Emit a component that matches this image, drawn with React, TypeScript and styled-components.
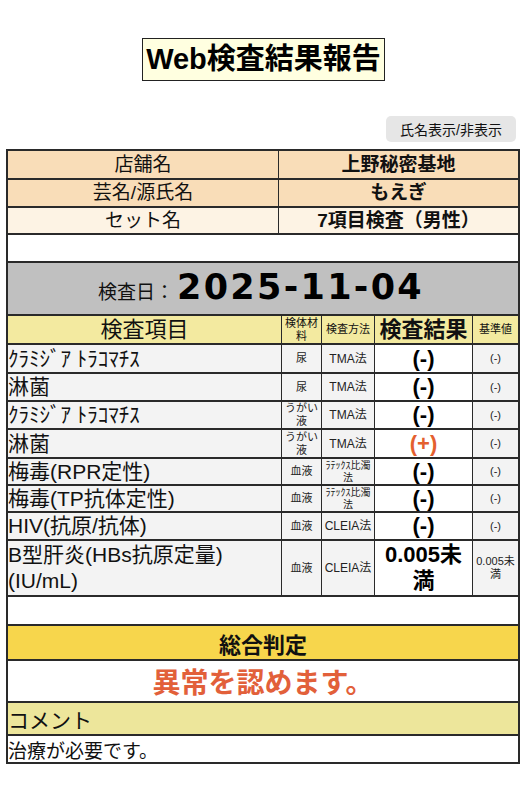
import React from 'react';
import styled, { createGlobalStyle } from 'styled-components';

const LINE = '#2a2a2a';

const GlobalStyle = createGlobalStyle`
  html, body { margin: 0; padding: 0; background: #fff; }
  body {
    font-family: "Liberation Sans", "Noto Sans CJK JP", sans-serif;
    color: #111;
  }
  * { box-sizing: border-box; }
`;

const Page = styled.div`
  width: 527px;
  padding-top: 38px;
  padding-bottom: 36px;
`;

const TitleBar = styled.div`
  display: flex;
  justify-content: center;
`;

const Title = styled.h1`
  margin: 0;
  height: 43px;
  padding: 0 3px;
  border: 1.5px solid #222;
  background: #ffffe0;
  font-size: 29px;
  font-weight: 700;
  line-height: 40px;
  color: #000;
`;

const Toolbar = styled.div`
  display: flex;
  justify-content: flex-end;
  margin-top: 35px;
  padding-right: 11px;
`;

const ToggleButton = styled.button`
  height: 26px;
  padding: 0 14px;
  border: none;
  border-radius: 5px;
  background: #e6e6e6;
  font-family: inherit;
  font-size: 14px;
  color: #111;
`;

const Sheet = styled.div`
  margin: 7px 7px 0 6px;
  border: 2px solid ${LINE};
`;

const Row = styled.div<{ $h: number; $bg?: string }>`
  display: flex;
  height: ${(p) => p.$h}px;
  background: ${(p) => p.$bg || '#fff'};
  &:not(:first-child) {
    border-top: 2px solid ${LINE};
  }
`;

const InfoRow = styled(Row)`
  display: grid;
  grid-template-columns: 270px 1fr;
  grid-template-rows: minmax(0, 1fr);
`;

const ResultRow = styled(Row)`
  display: grid;
  grid-template-columns: 273px 40px 53px 98px 1fr;
  grid-template-rows: minmax(0, 1fr);
`;

const Cell = styled.div`
  display: flex;
  align-items: center;
  justify-content: center;
  text-align: center;
  min-width: 0;
  min-height: 0;
  &:not(:first-child) {
    border-left: 1px solid ${LINE};
  }
`;

const InfoLabel = styled(Cell)`
  font-size: 19px;
  line-height: 24px;
`;

const InfoValue = styled(Cell)`
  font-size: 19px;
  font-weight: 700;
  line-height: 24px;
`;

const DateBar = styled(Row)`
  background: #c0c0c0;
  align-items: flex-end;
  justify-content: center;
  padding-bottom: 9px;
`;

const DateLine = styled.div`
  display: flex;
  align-items: baseline;
  margin-left: -4px;
`;

const DateLabel = styled.span`
  font-size: 19px;
`;

const DateValue = styled.span`
  font-family: "DejaVu Sans", sans-serif;
  font-size: 35px;
  font-weight: 700;
  letter-spacing: 2.3px;
  line-height: 35px;
  margin-left: 3px;
  color: #000;
`;

const HeadCell = styled(Cell)<{ $big?: boolean; $bold?: boolean }>`
  font-size: ${(p) => (p.$big ? '22px' : '11px')};
  font-weight: ${(p) => (p.$bold ? 700 : 400)};
  line-height: ${(p) => (p.$big ? '24px' : '13px')};
`;

const ItemCell = styled(Cell)`
  justify-content: flex-start;
  text-align: left;
  background: #f3f3f3;
  font-size: 21px;
  line-height: 26px;
`;

const SmallCell = styled(Cell)<{ $size?: number }>`
  background: #f3f3f3;
  font-size: ${(p) => p.$size || 11}px;
  line-height: ${(p) => (p.$size || 11) + 2}px;
  color: #222;
`;

const ResultCell = styled(Cell)<{ $positive?: boolean }>`
  background: #fff;
  font-size: 22px;
  font-weight: 700;
  line-height: 26px;
  color: ${(p) => (p.$positive ? '#e4602f' : '#000')};
`;

const BandTitle = styled(Row)`
  background: #f7d64c;
  align-items: center;
  justify-content: center;
  font-size: 22px;
  font-weight: 700;
`;

const Verdict = styled(Row)`
  align-items: center;
  justify-content: center;
  font-size: 28px;
  font-weight: 700;
  color: #e2603a;
`;

const CommentHead = styled(Row)`
  background: #ede69b;
  align-items: center;
  font-size: 21px;
`;

const CommentBody = styled(Row)`
  align-items: center;
  font-size: 19px;
`;

type Item = {
  name: string;
  sample: string;
  method: string;
  methodSize?: number;
  result: string;
  positive?: boolean;
  ref: string;
  h: number;
};

const items: Item[] = [
  { name: 'ｸﾗﾐｼﾞｱ ﾄﾗｺﾏﾁｽ', sample: '尿', method: 'TMA法', methodSize: 12, result: '(-)', ref: '(-)', h: 29 },
  { name: '淋菌', sample: '尿', method: 'TMA法', methodSize: 12, result: '(-)', ref: '(-)', h: 28 },
  { name: 'ｸﾗﾐｼﾞｱ ﾄﾗｺﾏﾁｽ', sample: 'うがい液', method: 'TMA法', methodSize: 12, result: '(-)', ref: '(-)', h: 28 },
  { name: '淋菌', sample: 'うがい液', method: 'TMA法', methodSize: 12, result: '(+)', positive: true, ref: '(-)', h: 29 },
  { name: '梅毒(RPR定性)', sample: '血液', method: 'ﾗﾃｯｸｽ比濁法', methodSize: 10, result: '(-)', ref: '(-)', h: 27 },
  { name: '梅毒(TP抗体定性)', sample: '血液', method: 'ﾗﾃｯｸｽ比濁法', methodSize: 10, result: '(-)', ref: '(-)', h: 27 },
  { name: 'HIV(抗原/抗体)', sample: '血液', method: 'CLEIA法', methodSize: 12, result: '(-)', ref: '(-)', h: 28 },
  { name: 'B型肝炎(HBs抗原定量)(IU/mL)', sample: '血液', method: 'CLEIA法', methodSize: 12, result: '0.005未満', ref: '0.005未満', h: 56 },
];

export default function App() {
  return (
    <>
      <GlobalStyle />
      <Page>
        <TitleBar>
          <Title>Web検査結果報告</Title>
        </TitleBar>
        <Toolbar>
          <ToggleButton type="button">氏名表示/非表示</ToggleButton>
        </Toolbar>
        <Sheet>
          <InfoRow $h={27} $bg="#f9ddb8">
            <InfoLabel>店舗名</InfoLabel>
            <InfoValue>上野秘密基地</InfoValue>
          </InfoRow>
          <InfoRow $h={28} $bg="#f9ddb8">
            <InfoLabel>芸名/源氏名</InfoLabel>
            <InfoValue>もえぎ</InfoValue>
          </InfoRow>
          <InfoRow $h={27} $bg="#fdf3e4">
            <InfoLabel>セット名</InfoLabel>
            <InfoValue>7項目検査（男性）</InfoValue>
          </InfoRow>
          <Row $h={28} />
          <DateBar $h={53}>
            <DateLine>
              <DateLabel>検査日：</DateLabel>
              <DateValue>2025-11-04</DateValue>
            </DateLine>
          </DateBar>
          <ResultRow $h={29} $bg="#f3eaa0">
            <HeadCell $big>検査項目</HeadCell>
            <HeadCell>検体材料</HeadCell>
            <HeadCell>検査方法</HeadCell>
            <HeadCell $big $bold>検査結果</HeadCell>
            <HeadCell>基準値</HeadCell>
          </ResultRow>
          {items.map((it, i) => (
            <ResultRow key={i} $h={it.h}>
              <ItemCell>{it.name}</ItemCell>
              <SmallCell>{it.sample}</SmallCell>
              <SmallCell $size={it.methodSize}>{it.method}</SmallCell>
              <ResultCell $positive={it.positive}>{it.result}</ResultCell>
              <SmallCell>{it.ref}</SmallCell>
            </ResultRow>
          ))}
          <Row $h={29} />
          <BandTitle $h={35}>総合判定</BandTitle>
          <Verdict $h={42}>異常を認めます。</Verdict>
          <CommentHead $h={33}>コメント</CommentHead>
          <CommentBody $h={28}>治療が必要です。</CommentBody>
        </Sheet>
      </Page>
    </>
  );
}
